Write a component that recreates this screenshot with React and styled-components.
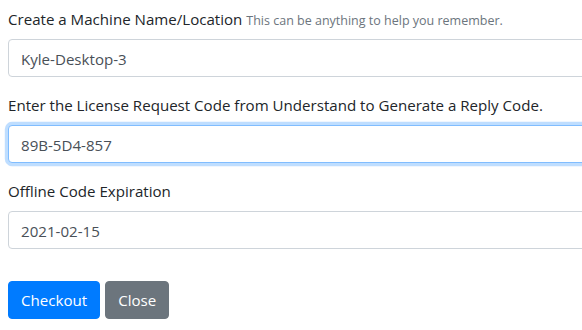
import styled, { createGlobalStyle } from "styled-components";

const GlobalStyle = createGlobalStyle`
  body {
    margin: 0;
    background: #ffffff;
    font-family: "Segoe UI", "Open Sans", "Liberation Sans", Arial, sans-serif;
    font-size: 15.1px;
    line-height: 24px;
    color: #212529;
    overflow: hidden;
  }
  * { box-sizing: border-box; }
`;

const Form = styled.form`
  width: 620px;
  padding: 7px 0 0 8px;
`;

const Group = styled.div`
  margin-bottom: 16px;
`;

const Label = styled.label`
  display: block;
  height: 24px;
  margin-bottom: 8px;
`;

const Hint = styled.small`
  font-size: 12.5px;
  line-height: 1;
  color: #6c757d;
`;

const Input = styled.input`
  display: block;
  width: 100%;
  height: 38px;
  padding: 7px 12px 5px;
  font-family: inherit;
  font-size: 15.1px;
  line-height: 24px;
  color: #495057;
  background: #fff;
  border: 1px solid ${(p) => (p.$focus ? "#80bdff" : "#ced4da")};
  border-radius: 4px;
  outline: none;
  box-shadow: ${(p) => (p.$focus ? "0 0 0 3.2px rgba(0,123,255,.25)" : "none")};
`;

const Actions = styled.div`
  display: flex;
  gap: 5px;
  padding-top: 16px;
`;

const Button = styled.button`
  height: 38px;
  padding: 6px 12px;
  font-family: inherit;
  font-size: 15.1px;
  line-height: 24px;
  color: #fff;
  background: ${(p) => (p.$variant === "secondary" ? "#6c757d" : "#007bff")};
  border: 1px solid ${(p) => (p.$variant === "secondary" ? "#6c757d" : "#007bff")};
  border-radius: 4px;
  cursor: pointer;
`;

export default function App() {
  return (
    <>
      <GlobalStyle />
      <Form onSubmit={(e) => e.preventDefault()}>
        <Group>
          <Label>
            Create a Machine Name/Location <Hint>This can be anything to help you remember.</Hint>
          </Label>
          <Input type="text" defaultValue="Kyle-Desktop-3" />
        </Group>
        <Group>
          <Label>Enter the License Request Code from Understand to Generate a Reply Code.</Label>
          <Input type="text" defaultValue="89B-5D4-857" $focus />
        </Group>
        <Group>
          <Label>Offline Code Expiration</Label>
          <Input type="text" defaultValue="2021-02-15" />
        </Group>
        <Actions>
          <Button type="submit">Checkout</Button>
          <Button type="button" $variant="secondary">Close</Button>
        </Actions>
      </Form>
    </>
  );
}
